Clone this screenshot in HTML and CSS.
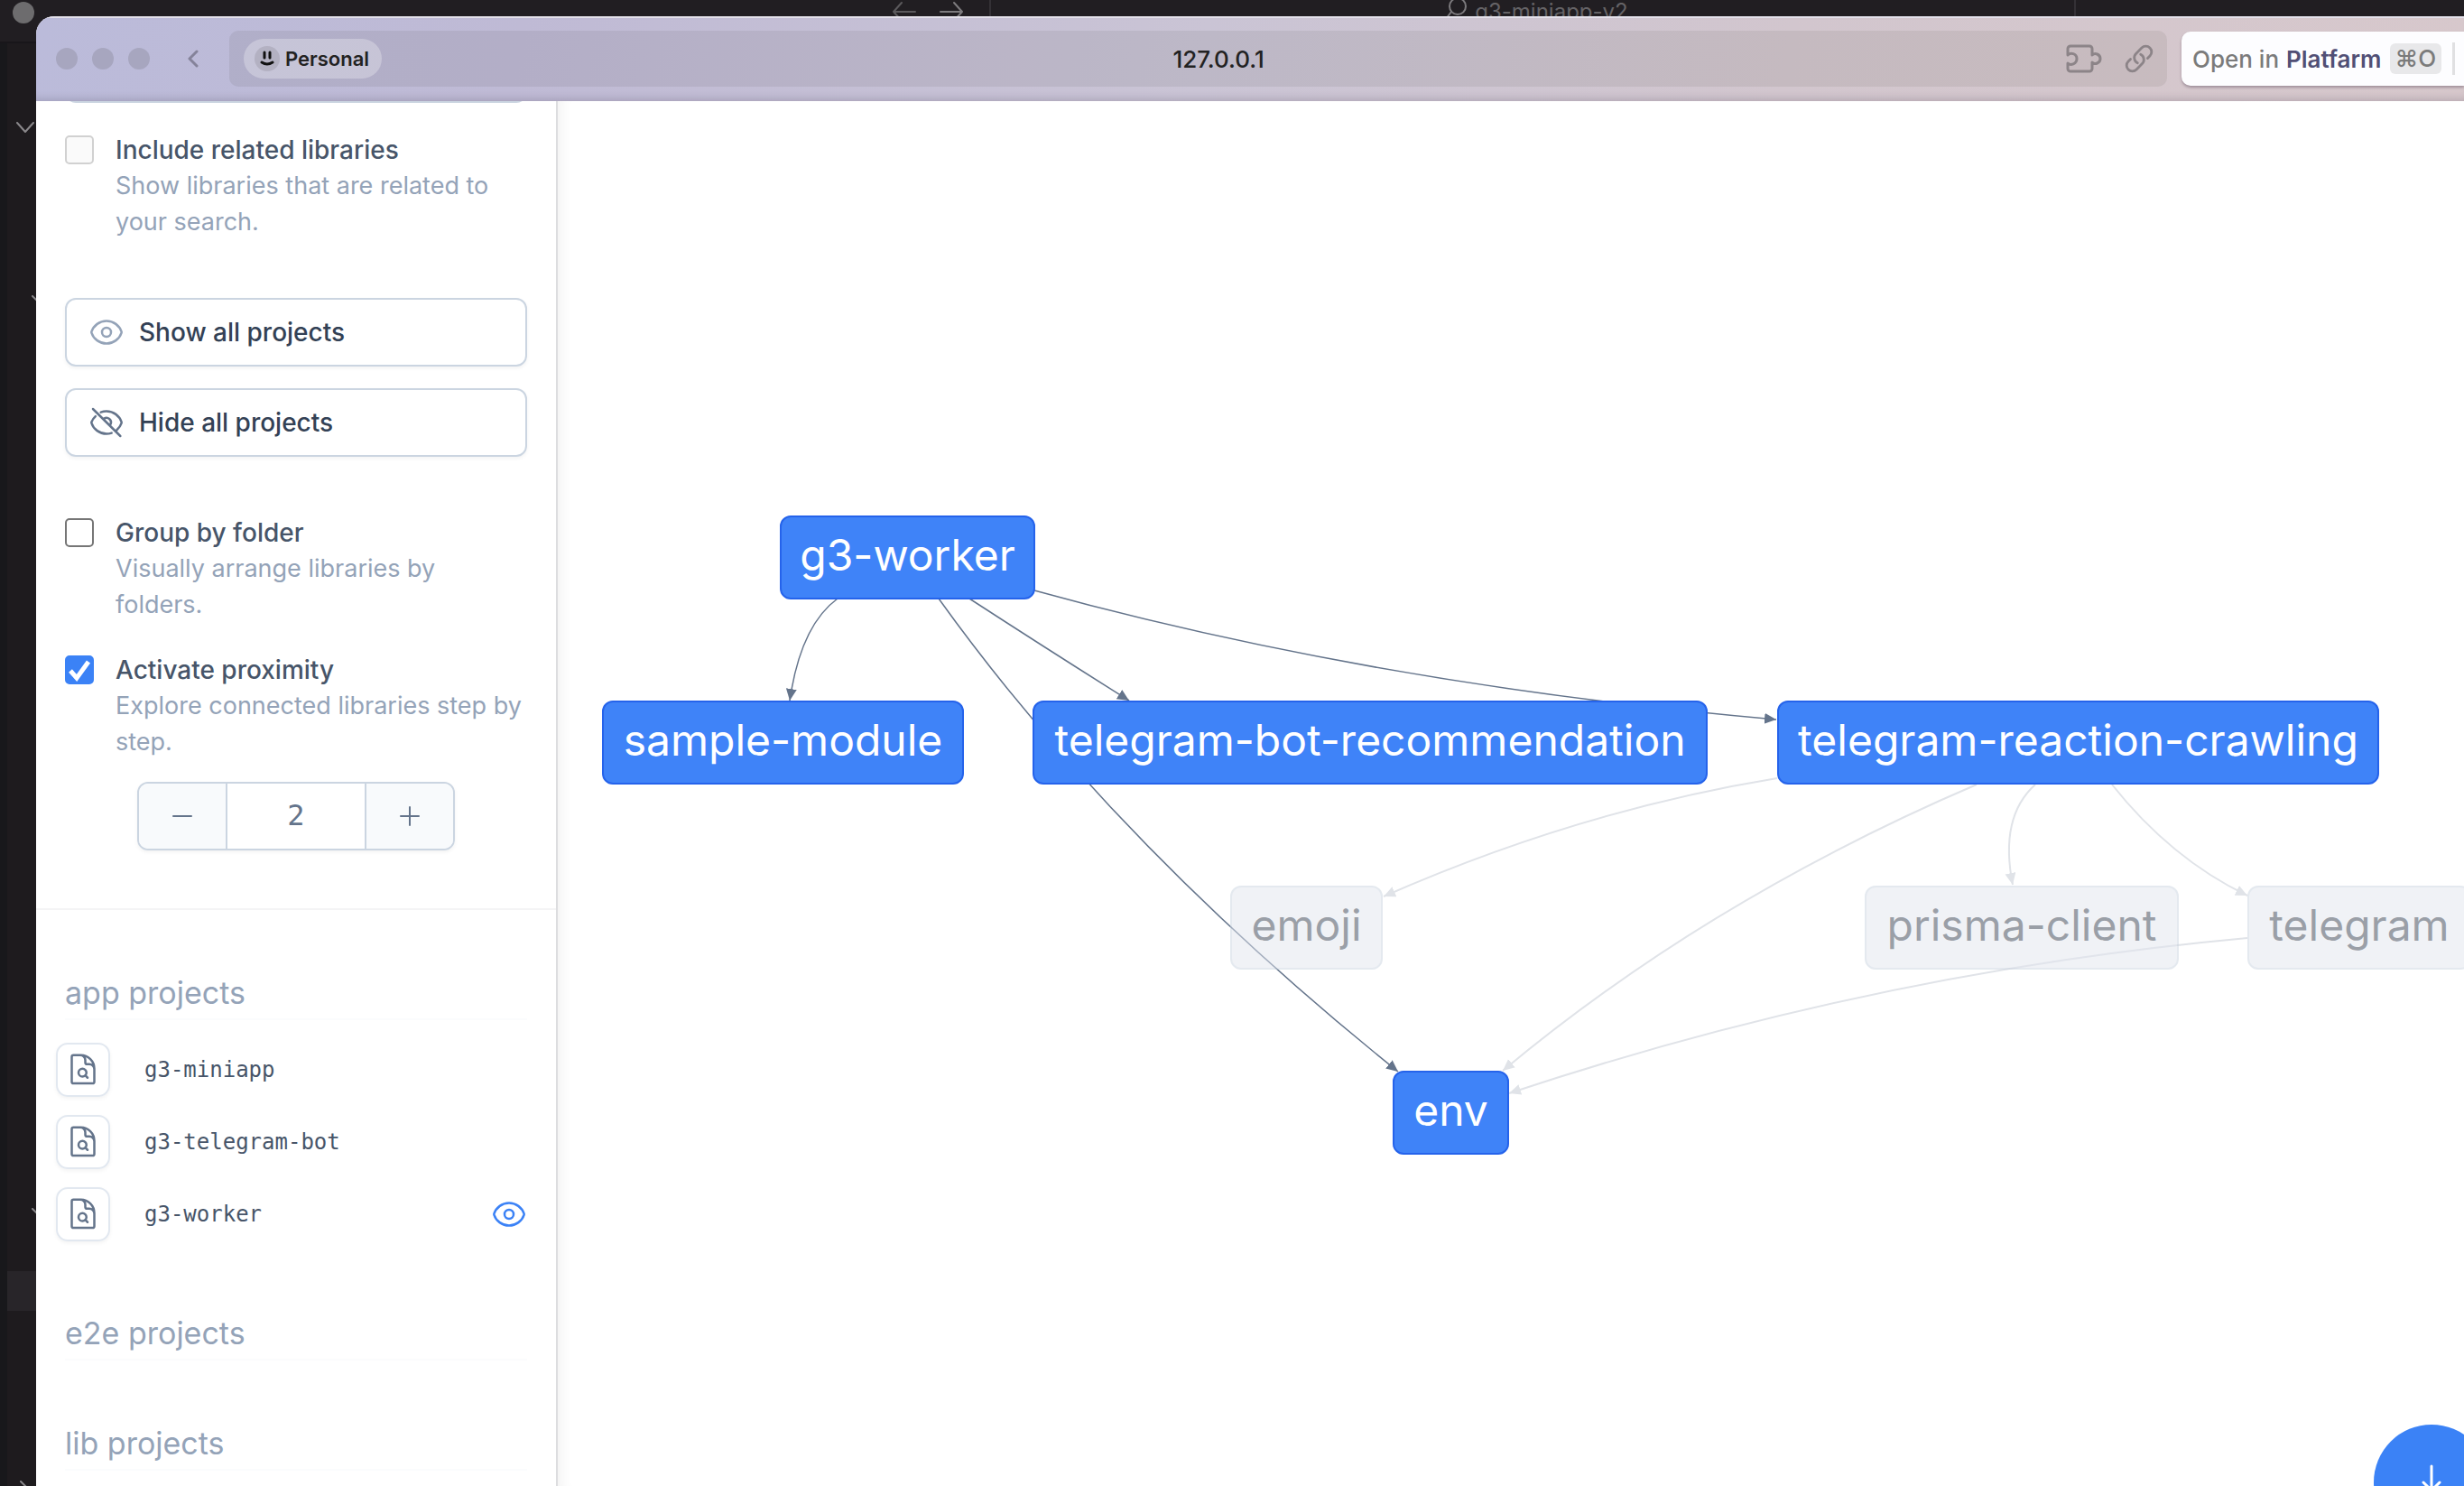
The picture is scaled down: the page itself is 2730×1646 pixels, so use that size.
FILE: index.html
```html
<!DOCTYPE html>
<html lang="en">
<head>
<meta charset="utf-8">
<meta name="viewport" content="width=device-width, initial-scale=1">
<title>Project graph</title>
<link rel="stylesheet" href="styles.css">
</head>
<body>

<svg class="sprite" aria-hidden="true">
  <symbol id="eye" viewBox="0 0 24 24">
    <path d="M2.036 12.322a1.012 1.012 0 0 1 0-.639C3.423 7.51 7.36 4.5 12 4.5c4.638 0 8.573 3.007 9.963 7.178.07.207.07.431 0 .639C20.577 16.49 16.64 19.5 12 19.5c-4.638 0-8.573-3.007-9.963-7.178Z"/>
    <circle cx="12" cy="12" r="3"/>
  </symbol>
  <symbol id="eye-off" viewBox="0 0 24 24">
    <path d="M4.7 7.9a10.5 10.5 0 0 0-2.664 3.783 1.012 1.012 0 0 0 0 .639C3.423 16.49 7.36 19.5 12 19.5c1.2 0 2.3-.2 3.4-.55M8.2 5.2A10.5 10.5 0 0 1 12 4.5c4.638 0 8.573 3.007 9.963 7.178.07.207.07.431 0 .639a10.5 10.5 0 0 1-3.1 4.6M10.4 9.4A3 3 0 0 1 14.8 13M3 3l18.2 18"/>
  </symbol>
  <symbol id="doc-search" viewBox="0 0 24 24">
    <path d="M19.5 14.25v-2.625a3.375 3.375 0 0 0-3.375-3.375h-1.5A1.125 1.125 0 0 1 13.5 7.125v-1.5a3.375 3.375 0 0 0-3.375-3.375H8.25m5.231 13.481L15 17.25m-4.5-15H5.625c-.621 0-1.125.504-1.125 1.125v16.5c0 .621.504 1.125 1.125 1.125h12.75c.621 0 1.125-.504 1.125-1.125V11.25a9 9 0 0 0-9-9Zm3.750 11.625a2.625 2.625 0 1 1-5.250 0 2.625 2.625 0 0 1 5.250 0Z"/>
  </symbol>
</svg>

<!-- Editor window that sits behind the browser -->
<div class="editor" aria-hidden="true">
  <div class="editor-bar">
    <span class="editor-light"></span>
    <svg class="editor-arrows" viewBox="0 0 80 24"><path d="M26 13H2M11 3 2 13l9 10"/><path class="lit" d="M54 13h24M69 3l9 10-9 10"/></svg>
    <div class="editor-search">
      <svg viewBox="0 0 26 26"><circle cx="15" cy="7" r="9"/><path d="m8 13-6 8"/></svg>
      <span>g3-miniapp-v2</span>
    </div>
  </div>
  <div class="editor-side">
    <svg class="chevron" viewBox="0 0 20 12"><path d="m1 1 9 10 9-10"/></svg>
    <svg class="twig twig-a" viewBox="0 0 8 8"><path d="m1 1 6 6"/></svg>
    <svg class="twig twig-b" viewBox="0 0 8 8"><path d="m1 1 6 6"/></svg>
    <span class="editor-row"></span>
    <svg class="twig twig-c" viewBox="0 0 8 8"><path d="m1 1 6 6"/></svg>
  </div>
</div>

<div class="window">
  <header class="titlebar">
    <div class="lights"><span></span><span></span><span></span></div>
    <button class="back" aria-label="Back"><svg viewBox="0 0 12 20"><path d="m10 2-8 8 8 8"/></svg></button>
    <div class="address">
      <button class="profile">
        <svg viewBox="0 0 28 28"><circle cx="14" cy="14" r="14"/><path d="M11 7v6M17 7v6M8 18q6 4 12 0"/></svg>
        Personal
      </button>
      <button class="url">127.0.0.1</button>
      <button class="tool" aria-label="Extensions"><svg class="puzzle" viewBox="0 0 40 32"><path d="M2 11V5a3 3 0 0 1 3-3h21a3 3 0 0 1 3 3v7c3-3 9-1 9 4s-6 7-9 4v7a3 3 0 0 1-3 3H5a3 3 0 0 1-3-3v-6c3 3 10 1 10-5s-7-7-10-4z"/></svg></button>
      <button class="tool" aria-label="Copy link"><svg class="link" viewBox="0 0 24 24"><path d="M13.19 8.688a4.5 4.5 0 0 1 1.242 7.244l-4.5 4.5a4.5 4.5 0 0 1-6.364-6.364l1.757-1.757m13.35-.622 1.757-1.757a4.5 4.5 0 0 0-6.364-6.364l-4.5 4.5a4.5 4.5 0 0 0 1.242 7.244"/></svg></button>
    </div>
    <button class="open-in">Open in <b>Platfarm</b><kbd>⌘O</kbd><i class="rule"></i></button>
  </header>

  <div class="page">
    <aside class="sidebar">
      <section class="controls">
        <input class="search" type="text" aria-label="Search">

        <div class="option">
          <input type="checkbox" id="related" disabled>
          <div><label for="related">Include related libraries</label><p>Show libraries that are related to your search.</p></div>
        </div>

        <div class="actions">
          <button class="wide"><svg class="icon soft"><use href="#eye"/></svg>Show all projects</button>
          <button class="wide"><svg class="icon"><use href="#eye-off"/></svg>Hide all projects</button>
        </div>

        <div class="option">
          <input type="checkbox" id="group">
          <div><label for="group">Group by folder</label><p>Visually arrange libraries by folders.</p></div>
        </div>
        <div class="option">
          <input type="checkbox" id="proximity" checked>
          <div><label for="proximity">Activate proximity</label><p>Explore connected libraries step by step.</p></div>
        </div>

        <div class="stepper">
          <button aria-label="Decrease depth"><svg viewBox="0 0 24 24"><path d="M2 12h20"/></svg></button>
          <input type="text" value="2" aria-label="Proximity depth">
          <button aria-label="Increase depth"><svg viewBox="0 0 24 24"><path d="M2 12h20M12 2v20"/></svg></button>
        </div>
      </section>

      <section class="projects">
        <h2>app projects</h2>
        <ul>
          <li><button class="focus" aria-label="Focus g3-miniapp"><svg class="icon"><use href="#doc-search"/></svg></button><span>g3-miniapp</span></li>
          <li><button class="focus" aria-label="Focus g3-telegram-bot"><svg class="icon"><use href="#doc-search"/></svg></button><span>g3-telegram-bot</span></li>
          <li><button class="focus" aria-label="Focus g3-worker"><svg class="icon"><use href="#doc-search"/></svg></button><span>g3-worker</span><svg class="icon visible"><use href="#eye"/></svg></li>
        </ul>
      </section>
      <section class="projects"><h2>e2e projects</h2></section>
      <section class="projects"><h2>lib projects</h2></section>
    </aside>

    <main class="graph">
      <svg class="edges" aria-hidden="true">
        <defs>
          <marker id="tip" markerUnits="userSpaceOnUse" markerWidth="14" markerHeight="14" refX="13" refY="6" orient="auto"><path d="M0 0 13 6 0 12z" fill="#64748b"/></marker>
          <marker id="tip-dim" markerUnits="userSpaceOnUse" markerWidth="14" markerHeight="14" refX="13" refY="6" orient="auto"><path d="M0 0 13 6 0 12z" fill="#e0e3e8"/></marker>
        </defs>
        <g transform="translate(-618 -112)">
          <g class="dim">
            <path d="M1969 862Q1749 898 1533 993"/>
            <path d="M2190 869Q1893 996 1665 1186"/>
            <path d="M2255 869Q2215 905 2230 980"/>
            <path d="M2340 869Q2405 951 2490 992"/>
            <path d="M2490 1039Q2075 1077 1672 1211"/>
          </g>
          <g class="lit">
            <path d="M928 663Q887 693 875 776"/>
            <path d="M1074 663Q1165 722 1251 776"/>
            <path d="M1040 663Q1236 936 1549 1187"/>
            <path d="M1146 654Q1522 758 1968 797"/>
          </g>
        </g>
      </svg>
      <div class="node worker">g3-worker</div>
      <div class="node sample">sample-module</div>
      <div class="node recommend">telegram-bot-recommendation</div>
      <div class="node crawling">telegram-reaction-crawling</div>
      <div class="node dim emoji">emoji</div>
      <div class="node dim prisma">prisma-client</div>
      <div class="node dim telegram">telegram</div>
      <div class="node env">env</div>
      <button class="download" aria-label="Download image"><svg viewBox="0 0 24 24"><path d="M3 16.500v2.250A2.250 2.250 0 0 0 5.250 21h13.500A2.250 2.250 0 0 0 21 18.750V16.500M16.500 12 12 16.500m0 0L7.500 12m4.500 4.500V3"/></svg></button>
    </main>
  </div>
</div>
</body>
</html>
```
FILE: styles.css
```css
* { box-sizing: border-box; }

body {
  margin: 0;
  height: 100vh;
  padding: 18px 0 0 40px;
  display: flex;
  overflow: hidden;
  position: relative;
  background: #18181b;
  font-family: Inter, "Liberation Sans", sans-serif;
  color: #475569;
}

button, input { font: inherit; color: inherit; margin: 0; }
button { border: 0; padding: 0; background: none; cursor: pointer; }
svg { fill: none; stroke: currentColor; stroke-linecap: round; stroke-linejoin: round; flex: none; }
.sprite { position: absolute; width: 0; height: 0; }

/* Editor behind the browser window */
.editor { position: absolute; inset: 0; }
.editor-bar {
  position: relative;
  height: 48px;
  background: #211e22;
  border-bottom: 2px solid #18161a;
}
.editor-light {
  position: absolute;
  left: 14px;
  top: 2px;
  width: 24px;
  height: 24px;
  border-radius: 50%;
  background: #6d6c6e;
}
.editor-arrows { position: absolute; left: 988px; top: 0; width: 80px; height: 24px; color: #5b595c; stroke-width: 2; }
.editor-arrows .lit { stroke: #7d7b7e; }
.editor-search {
  position: absolute;
  left: 1096px;
  width: 1204px;
  top: 0;
  height: 46px;
  padding-left: 8px;
  display: flex;
  justify-content: center;
  gap: 8px;
  border: solid #343136;
  border-width: 0 2px;
  font-size: 24px;
  line-height: 26px;
  color: #656366;
}
.editor-search svg { width: 26px; height: 26px; stroke-width: 2; color: #7d7b7e; }
.editor-side { position: absolute; top: 48px; left: 8px; bottom: 0; width: 32px; background: #1e1b1e; }
.editor-side svg { position: absolute; stroke-width: 2; color: #8a888b; }
.editor-side .chevron { left: 10px; top: 87px; width: 20px; height: 12px; }
.twig { width: 8px; height: 8px; }
.twig-a { left: 27px; top: 279px; }
.twig-b { left: 27px; top: 1290px; }
.twig-c { left: 14px; bottom: -2px; }
.editor-row { position: absolute; top: 1360px; left: 0; width: 32px; height: 44px; background: #282529; }

/* Browser window */
.window {
  position: relative;
  flex: 1;
  min-width: 0;
  display: flex;
  flex-direction: column;
  overflow: hidden;
  border-radius: 20px 0 0 0;
  background: #fff;
}
.titlebar {
  flex: none;
  height: 94px;
  padding-left: 22px;
  display: flex;
  align-items: center;
  background: linear-gradient(100deg, #bbbbda 0%, #bfbad5 20%, #cac4d5 48%, #d2c6ce 72%, #d7c8cc 100%);
  box-shadow: inset 0 2px #e3e0ea, inset 0 -10px 10px -8px rgba(60, 50, 70, .22);
}
.lights { display: flex; gap: 16px; }
.lights span { width: 24px; height: 24px; border-radius: 50%; background: #a7a6bf; }
.back { width: 32px; height: 40px; margin: 0 24px 0 32px; }
.back svg { display: block; width: 12px; height: 20px; margin: auto; color: #85839a; stroke-width: 3; }
.address {
  flex: 1;
  height: 62px;
  padding: 0 14px 0 16px;
  display: flex;
  align-items: center;
  border-radius: 10px;
  background: rgba(30, 30, 20, .07);
}
.profile {
  height: 44px;
  padding: 0 14px 0 12px;
  display: flex;
  align-items: center;
  gap: 6px;
  border-radius: 22px;
  background: rgba(255, 255, 255, .28);
  font-size: 22px;
  font-weight: 600;
  color: #222;
}
.profile svg { width: 28px; height: 28px; stroke-width: 3; color: #111; }
.profile circle { fill: #b3b1c2; stroke: none; }
.url { flex: 1; padding-right: 12px; font-size: 26px; font-weight: 500; color: #222; text-align: center; }
.tool { color: #8c8488; }
.tool svg { display: block; }
.tool + .tool { margin-left: 24px; }
.puzzle { width: 40px; height: 32px; stroke-width: 3; }
.link { width: 34px; height: 34px; stroke-width: 2; }
.open-in {
  width: 313px;
  height: 60px;
  margin-left: 16px;
  padding-left: 12px;
  display: flex;
  align-items: center;
  border-radius: 10px 0 0 10px;
  background: #fdfdff;
  box-shadow: 0 2px 3px rgba(60, 40, 60, .35);
  font-size: 26px;
  font-weight: 500;
  color: #7b7b7b;
  white-space: nowrap;
}
.open-in b { margin-left: 8px; font-weight: 600; color: #514f75; }
.open-in kbd {
  height: 34px;
  margin-left: 9px;
  padding: 0 6px;
  border-radius: 6px;
  background: #e8e8ea;
  font: 500 26px/34px Inter, "DejaVu Sans", sans-serif;
}
.rule { width: 3px; height: 36px; margin-left: 12px; background: #e0e0e2; }

.page { flex: 1; min-height: 0; display: flex; }

/* Sidebar */
.sidebar {
  flex: none;
  width: 578px;
  overflow: hidden;
  border-right: 2px solid #dcdddf;
  background: #fff;
  font-size: 28px;
  line-height: 40px;
}
.controls { padding: 0 32px 64px; border-bottom: 2px solid #f4f4f5; }
.search {
  display: block;
  width: 100%;
  height: 76px;
  margin-top: -74px;
  border: 2px solid #cbd5e1;
  border-radius: 12px;
}
.option { display: flex; gap: 24px; margin-top: 32px; }
.option label { color: #475569; font-weight: 500; }
.option p { margin: 0; font-size: 27px; color: #94a3b8; }
.option input {
  appearance: none;
  flex: none;
  width: 32px;
  height: 32px;
  margin-top: 4px;
  border: 2px solid #767676;
  border-radius: 5px;
  background: #fff;
}
.option input:disabled { border-color: #d1d1d1; background: #fafafa; }
.option input:checked {
  border-color: #3b82f6;
  background: #3b82f6 url("data:image/svg+xml,%3Csvg xmlns='http://www.w3.org/2000/svg' viewBox='0 0 28 28'%3E%3Cpath d='M4 15l7 8L24 5' fill='none' stroke='white' stroke-width='5'/%3E%3C/svg%3E") center / 28px no-repeat;
}
.actions { display: grid; gap: 24px; margin: 64px 0; }
.wide {
  height: 76px;
  padding: 0 24px;
  display: flex;
  align-items: center;
  gap: 16px;
  border: 2px solid #cbd5e1;
  border-radius: 12px;
  box-shadow: 0 2px 4px rgba(0, 0, 0, .05);
  color: #334155;
  font-weight: 500;
}
.icon { width: 40px; height: 40px; stroke-width: 1.5; color: #64748b; }
.icon.soft { color: #94a3b8; }
.stepper {
  width: 352px;
  height: 76px;
  margin: 24px auto 0;
  display: flex;
  overflow: hidden;
  border: 2px solid #cbd5e1;
  border-radius: 12px;
  box-shadow: 0 2px 4px rgba(0, 0, 0, .05);
  color: #64748b;
}
.stepper button { width: 96px; background: #f8fafc; }
.stepper svg { display: block; width: 24px; height: 24px; margin: auto; stroke-width: 2; }
.stepper input {
  flex: 1;
  min-width: 0;
  border: solid #cbd5e1;
  border-width: 0 2px;
  padding: 0 0 2px;
  text-align: center;
  font: 32px "DejaVu Sans Mono", monospace;
}
.projects { padding: 0 32px; margin-top: 72px; }
.projects h2 {
  margin: 0;
  padding-bottom: 8px;
  border-bottom: 2px solid #fbfcfd;
  font-size: 34px;
  font-weight: 400;
  line-height: 40px;
  color: #94a3b8;
}
.projects ul { display: grid; gap: 20px; margin: 25px 0 82px; padding: 0; list-style: none; }
.projects li { display: flex; align-items: center; margin-left: -10px; }
.projects li span { flex: 1; padding-left: 38px; font: 24px/40px "DejaVu Sans Mono", monospace; }
.focus {
  width: 60px;
  height: 60px;
  border: 2px solid #e2e8f0;
  border-radius: 13px;
  box-shadow: 0 2px 4px rgba(0, 0, 0, .05);
}
.focus svg { display: block; margin: auto; }
.icon.visible { color: #3b82f6; }

/* Graph canvas */
.graph {
  position: relative;
  flex: 1;
  min-width: 0;
  overflow: hidden;
  box-shadow: inset 16px 0 16px -14px rgba(0, 0, 0, .07);
}
.edges { position: absolute; inset: 0; width: 100%; height: 100%; stroke-linecap: butt; }
.edges .lit path { stroke: #64748b; stroke-width: 1.5; marker-end: url(#tip); }
.edges .dim path { stroke: #e0e3e8; stroke-width: 2; marker-end: url(#tip-dim); }
.edges marker path { stroke: none; }
.node {
  position: absolute;
  height: 93px;
  border: 2px solid #2563eb;
  border-radius: 12px;
  background: #3f83f8;
  color: #fff;
  font-size: 48px;
  line-height: 84px;
  text-align: center;
  white-space: nowrap;
}
.node.dim { opacity: .5; border-color: #cbd5e1; background: #e2e6ef; color: #374151; }
.worker { left: 246px; top: 459px; width: 283px; }
.sample { left: 49px; top: 664px; width: 401px; }
.recommend { left: 526px; top: 664px; width: 748px; }
.crawling { left: 1351px; top: 664px; width: 667px; }
.emoji { left: 745px; top: 869px; width: 169px; }
.prisma { left: 1448px; top: 869px; width: 348px; }
.telegram { left: 1872px; top: 869px; width: 248px; }
.env { left: 925px; top: 1074px; width: 129px; }
.download {
  position: absolute;
  right: -28px;
  bottom: -60px;
  width: 128px;
  height: 128px;
  border-radius: 50%;
  background: #3b82f6;
  color: #fff;
}
.download svg { display: block; width: 48px; height: 48px; margin: auto; stroke-width: 1.5; }
```
